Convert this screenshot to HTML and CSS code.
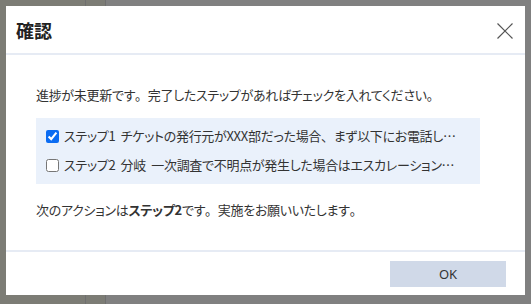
FILE: index.html
```html
<!DOCTYPE html>
<html lang="ja">
<head>
<meta charset="UTF-8">
<title>確認</title>
<link rel="stylesheet" href="styles.css">
</head>
<body>
    <div class="backdrop">
        <div class="dialog">
            <div class="dialog__header">
                <h2 class="dialog__title">確認</h2>
                <button class="dialog__close" aria-label="閉じる">
                    <svg width="16" height="16" viewBox="0 0 16 16"><path d="M0.5 0.5 L15.5 15.5 M15.5 0.5 L0.5 15.5" stroke="#555" stroke-width="1.2" fill="none"/></svg>
                </button>
            </div>

            <div class="dialog__body">
                <p class="message">進捗が未更新です<span class="punct">。</span>完了したステップがあればチェックを入れてください<span class="punct">。</span></p>

                <div class="step-list">
                    <label class="step">
                        <input type="checkbox" checked>
                        <span class="step__text">ステップ1&nbsp; チケットの発行元がXXX部だった場合<span class="punct">、</span>まず以下にお電話し<span class="punct">、</span>内容を確認してください<span class="punct">。</span></span>
                    </label>
                    <label class="step">
                        <input type="checkbox">
                        <span class="step__text">ステップ2&nbsp; 分岐&nbsp; 一次調査で不明点が発生した場合はエスカレーションを行ってください<span class="punct">。</span></span>
                    </label>
                </div>

                <p class="message">次のアクションは<b>ステップ2</b>です<span class="punct">。</span>実施をお願いいたします<span class="punct">。</span></p>
            </div>

            <div class="dialog__footer">
                <button class="ok-button">OK</button>
            </div>
        </div>
    </div>
</body>
</html>
```

FILE: styles.css
```css
:root
{
    --text-colour: #333333;
    --divider: #e6ebf4;
    --step-background: #eaf1fb;
    --button-colour: #d0d9e8;
}

body
{
    margin: 0;
    font-family: "Noto Sans CJK JP", "Noto Sans", sans-serif;
    color: var(--text-colour);
}

.backdrop
{
    width: 531px;
    height: 304px;
    box-sizing: border-box;
    padding: 6px;
    background:
        linear-gradient(to right, transparent 85px, #6f6f6f 85px, #6f6f6f 86px, transparent 86px, transparent 105px, #6f6f6f 105px, #6f6f6f 106px, transparent 106px),
        linear-gradient(to right, #7c7c75 0, #7c7c75 106px, #808080 106px);
}

.dialog
{
    width: 519px;
    height: 289px;
    background-color: #ffffff;
    display: flex;
    flex-direction: column;
}

.dialog__header
{
    height: 47px;
    border-bottom: 2px solid var(--divider);
    display: flex;
    align-items: center;
    justify-content: space-between;
    padding: 0 12px 0 10px;
}

.dialog__title
{
    margin: 0;
    font-size: 18px;
    font-weight: bold;
    color: #222222;
    padding-top: 1px;
}

.dialog__close
{
    border: none;
    background: none;
    padding: 0;
    width: 16px;
    height: 16px;
    margin-top: 2px;
    cursor: pointer;
}

.dialog__close svg
{
    display: block;
}

.dialog__body
{
    flex: 1;
    padding: 30px 45px 0 30px;
}

/* kana set proportional, but keep full-width punctuation */
.message, .step
{
    font-size: 13px;
    line-height: 20px;
    font-feature-settings: "palt";
    letter-spacing: -0.3px;
}

.punct
{
    font-feature-settings: normal;
}

.message
{
    margin: 0;
}

.message b
{
    font-weight: bold;
}

.step-list
{
    margin: 13px 0 16px 0;
    padding: 8px 10px 9px 10px;
    background-color: var(--step-background);
    display: flex;
    flex-direction: column;
    gap: 9px;
}

.step
{
    display: flex;
    align-items: center;
    min-width: 0;
}

.step input
{
    width: 13px;
    height: 13px;
    margin: 0 5px 0 0;
    flex-shrink: 0;
    accent-color: #0b6cf2;
}

.step__text
{
    white-space: nowrap;
    overflow: hidden;
    text-overflow: ellipsis;
    padding-right: 6px;
}

.dialog__footer
{
    height: 45px;
    border-top: 2px solid var(--divider);
    display: flex;
    justify-content: flex-end;
    align-items: flex-start;
    padding: 9px 19px 0 0;
    box-sizing: border-box;
}

.ok-button
{
    width: 116px;
    height: 26px;
    border: none;
    background-color: var(--button-colour);
    color: #333333;
    font-family: "Noto Sans", sans-serif;
    font-size: 13px;
    cursor: pointer;
}
```
